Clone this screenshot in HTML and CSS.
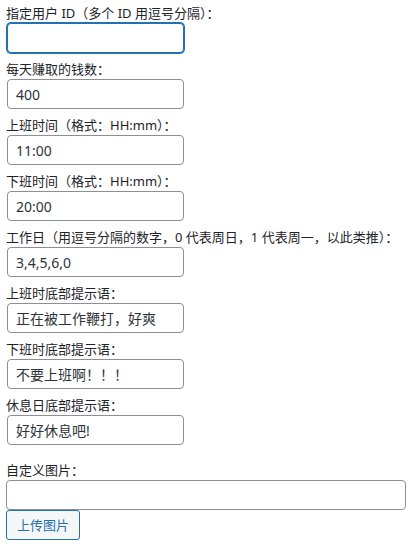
FILE: index.html
```html
<!DOCTYPE html>
<html lang="zh-CN">
<head>
    <meta charset="UTF-8">
    <meta name="viewport" content="width=device-width, initial-scale=1.0">
    <title>摸鱼设置</title>
    <link rel="stylesheet" href="styles.css">
</head>
<body>
    <form class="settings">
        <div class="field">
            <label for="user-ids">指定用户 ID（多个 ID 用逗号分隔）：</label>
            <input type="text" id="user-ids" class="focused" value="">
        </div>
        <div class="field">
            <label for="daily-money">每天赚取的钱数：</label>
            <input type="text" id="daily-money" value="400">
        </div>
        <div class="field">
            <label for="start-time">上班时间（格式：HH:mm）：</label>
            <input type="text" id="start-time" value="11:00">
        </div>
        <div class="field">
            <label for="end-time">下班时间（格式：HH:mm）：</label>
            <input type="text" id="end-time" value="20:00">
        </div>
        <div class="field">
            <label for="workdays">工作日（用逗号分隔的数字，0 代表周日，1 代表周一，以此类推）：</label>
            <input type="text" id="workdays" value="3,4,5,6,0">
        </div>
        <div class="field">
            <label for="tip-work">上班时底部提示语：</label>
            <input type="text" id="tip-work" value="正在被工作鞭打，好爽">
        </div>
        <div class="field">
            <label for="tip-off">下班时底部提示语：</label>
            <input type="text" id="tip-off" value="不要上班啊！！！">
        </div>
        <div class="field">
            <label for="tip-rest">休息日底部提示语：</label>
            <input type="text" id="tip-rest" value="好好休息吧!">
        </div>
        <div class="field field-image">
            <label for="custom-image">自定义图片：</label>
            <input type="text" id="custom-image" class="wide" value="">
            <button type="button" class="button">上传图片</button>
        </div>
    </form>
</body>
</html>
```

FILE: styles.css
```css
body {
    margin: 0;
    background: #ffffff;
    color: #1d2327;
    font-family: "Noto Sans", "Noto Sans CJK SC", sans-serif;
    font-size: 13px;
}

.settings {
    padding: 3px 5px 0 6px;
}

.field {
    margin-bottom: 6px;
}

.field label {
    display: block;
    line-height: 20px;
    font-size: 13px;
    color: #1d2327;
}

.field input {
    display: block;
    box-sizing: border-box;
    width: 177px;
    height: 30px;
    margin: 0 0 0 1px;
    padding: 0 8px;
    border: 1px solid #8c8f94;
    border-radius: 4px;
    background: #ffffff;
    color: #2c3338;
    font-family: "Noto Sans", "Noto Sans CJK SC", sans-serif;
    font-size: 14px;
    line-height: 28px;
    outline: none;
}

.field input.focused {
    border-color: #2271b1;
    box-shadow: 0 0 0 1px #2271b1;
}

.field-image {
    margin-top: 15px;
}

.field input.wide {
    width: 400px;
    margin-left: 0;
}

.button {
    display: block;
    box-sizing: border-box;
    height: 30px;
    padding: 0 10px;
    border: 1px solid #2271b1;
    border-radius: 3px;
    background: #f6f7f7;
    color: #2271b1;
    font-family: "Noto Sans", "Noto Sans CJK SC", sans-serif;
    font-size: 13px;
    line-height: 28px;
    cursor: pointer;
}
```
